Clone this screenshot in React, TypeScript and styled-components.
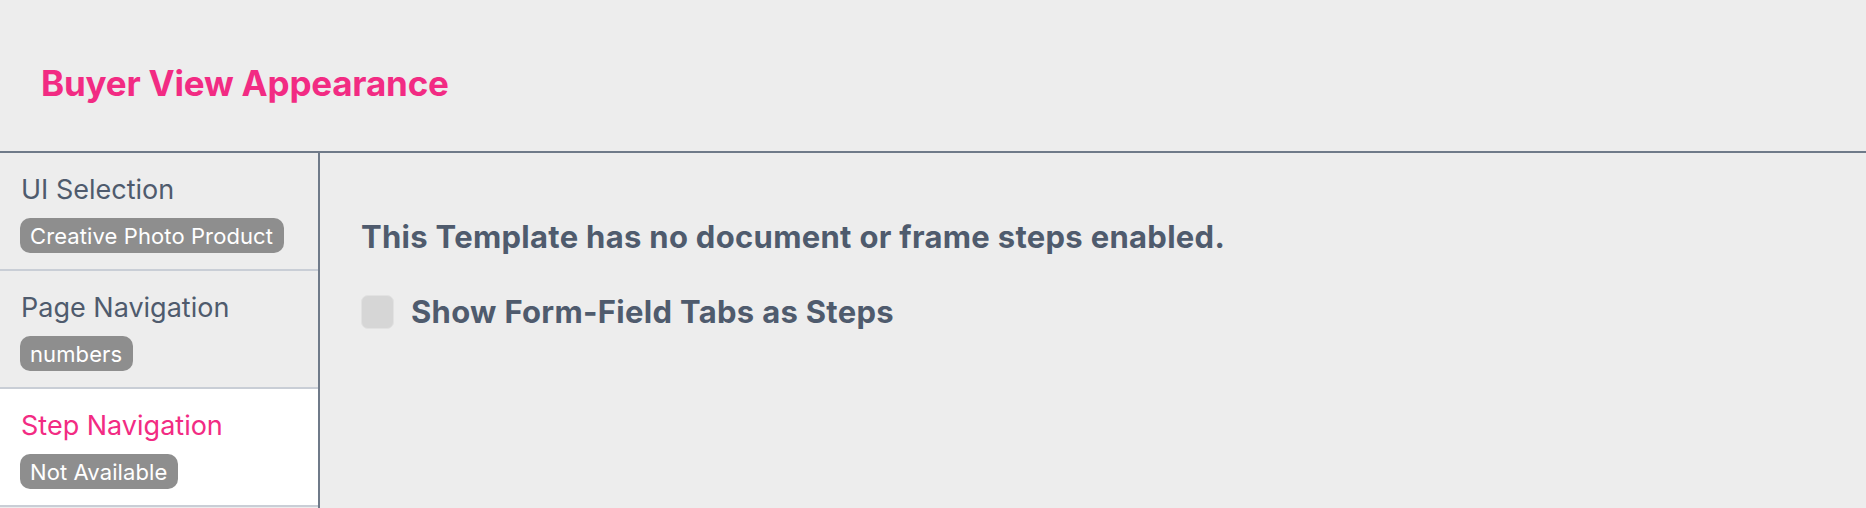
import React from "react";
import styled, { createGlobalStyle } from "styled-components";

const GlobalStyle = createGlobalStyle`
  html, body {
    margin: 0;
    padding: 0;
    background: #ededed;
  }
  body {
    font-family: Inter, "Noto Sans", "Liberation Sans", sans-serif;
    -webkit-font-smoothing: antialiased;
  }
`;

const Page = styled.div`
  width: 1866px;
  height: 508px;
  background: #ededed;
  display: flex;
  flex-direction: column;
  overflow: hidden;
`;

const Header = styled.header`
  height: 153px;
  flex: none;
  display: flex;
  align-items: center;
  padding-left: 41px;
  padding-top: 14px;
  box-sizing: border-box;
  border-bottom: 2px solid #6f7a89;
`;

const Title = styled.h1`
  margin: 0;
  font-size: 35px;
  font-weight: 700;
  color: #f22b83;
  letter-spacing: -0.2px;
`;

const Body = styled.div`
  flex: 1;
  display: flex;
  min-height: 0;
`;

const Sidebar = styled.nav`
  width: 320px;
  flex: none;
  box-sizing: border-box;
  border-right: 2px solid #6f7a89;
  display: flex;
  flex-direction: column;
`;

const NavItem = styled.div<{ $active?: boolean }>`
  height: 118px;
  flex: none;
  box-sizing: border-box;
  padding: 20px 20px 0;
  background: ${(p) => (p.$active ? "#ffffff" : "transparent")};
  border-bottom: 2px solid #c9ced6;
  display: flex;
  flex-direction: column;
  align-items: flex-start;
  gap: 11px;
`;

const NavLabel = styled.div<{ $active?: boolean }>`
  font-size: 27px;
  line-height: 34px;
  color: ${(p) => (p.$active ? "#f22b83" : "#4f5b6d")};
  padding-left: 1px;
`;

const Badge = styled.span`
  display: inline-flex;
  align-items: center;
  height: 35px;
  padding: 0 11px 0 10px;
  border-radius: 10px;
  background: #8e8e8e;
  color: #ffffff;
  font-size: 22px;
  font-weight: 400;
  letter-spacing: 0.1px;
`;

const Main = styled.main`
  flex: 1;
  padding: 66px 0 0 41px;
  display: flex;
  flex-direction: column;
  align-items: flex-start;
  gap: 38px;
`;

const Notice = styled.p`
  margin: 0;
  font-size: 31px;
  line-height: 36px;
  font-weight: 700;
  color: #4f5b6d;
  letter-spacing: 0.3px;
`;

const CheckRow = styled.label`
  display: flex;
  align-items: center;
  gap: 17px;
  cursor: pointer;
`;

const CheckBox = styled.span`
  width: 33px;
  height: 34px;
  box-sizing: border-box;
  border-radius: 7px;
  background: #d6d6d6;
  border: 1px solid #e2e2e2;
  flex: none;
`;

const CheckText = styled.span`
  font-size: 31px;
  font-weight: 700;
  color: #4f5b6d;
  letter-spacing: 0.3px;
`;

const items = [
  { label: "UI Selection", badge: "Creative Photo Product" },
  { label: "Page Navigation", badge: "numbers" },
  { label: "Step Navigation", badge: "Not Available", active: true },
];

export default function App() {
  return (
    <>
      <GlobalStyle />
      <Page>
        <Header>
          <Title>Buyer View Appearance</Title>
        </Header>
        <Body>
          <Sidebar>
            {items.map((it) => (
              <NavItem key={it.label} $active={it.active}>
                <NavLabel $active={it.active}>{it.label}</NavLabel>
                <Badge>{it.badge}</Badge>
              </NavItem>
            ))}
          </Sidebar>
          <Main>
            <Notice>This Template has no document or frame steps enabled.</Notice>
            <CheckRow>
              <CheckBox />
              <CheckText>Show Form-Field Tabs as Steps</CheckText>
            </CheckRow>
          </Main>
        </Body>
      </Page>
    </>
  );
}
